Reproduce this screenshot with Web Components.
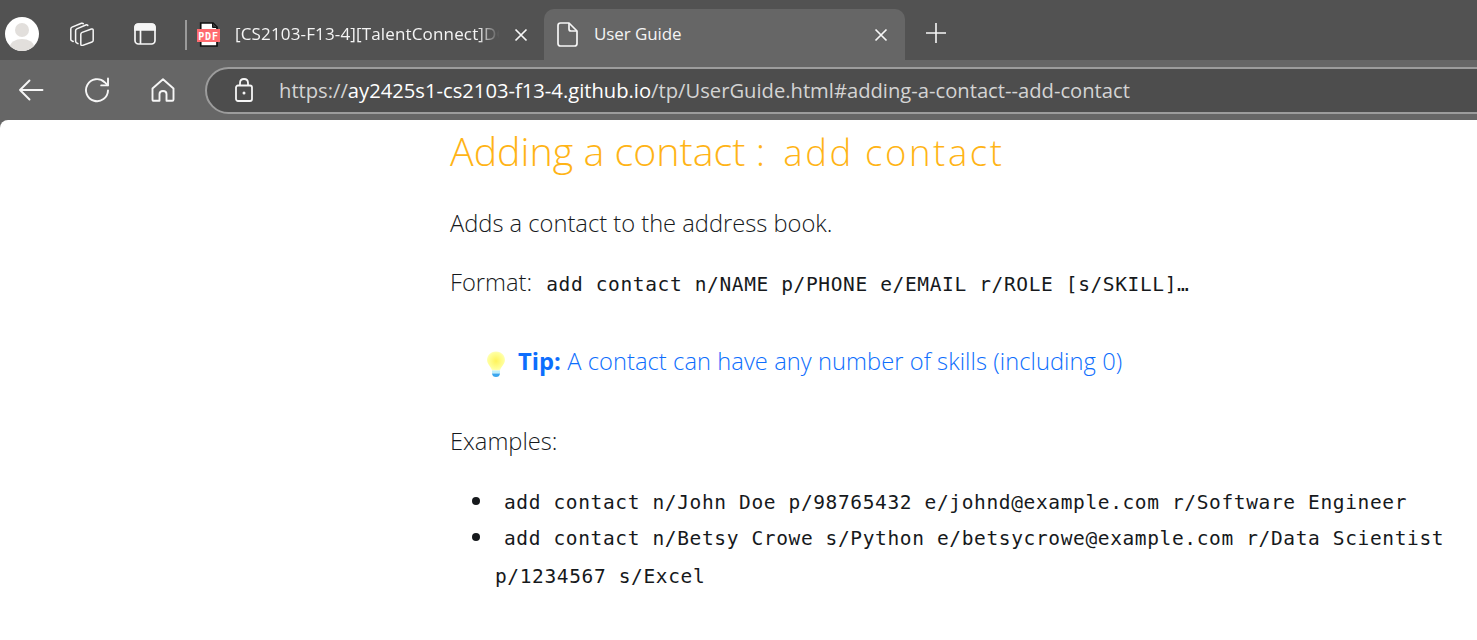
<!DOCTYPE html>
<html>
<head>
<meta charset="utf-8">
<title>User Guide</title>
<style>
  html, body { margin: 0; padding: 0; height: 640px; overflow: hidden; background: #666; }
  body { font-family: "Open Sans", "Noto Sans", sans-serif; }
</style>
</head>
<body>

<browser-tabstrip>
  <browser-tab slot="tabs" title-text="[CS2103-F13-4][TalentConnect]DG" kind="pdf"></browser-tab>
  <browser-tab slot="tabs" title-text="User Guide" kind="doc" active></browser-tab>
</browser-tabstrip>
<browser-toolbar></browser-toolbar>

<doc-page>
  <doc-heading>Adding a contact : <inline-code slot="code">add contact</inline-code></doc-heading>
  <doc-para style="margin-top:27px">Adds a contact to the address book.</doc-para>
  <doc-para style="margin-top:21px">Format: <inline-code>add contact n/NAME p/PHONE e/EMAIL r/ROLE [s/SKILL]…</inline-code></doc-para>
  <tip-box>A contact can have any number of skills (including 0)</tip-box>
  <doc-para>Examples:</doc-para>
  <doc-list>
    <doc-item><inline-code>add contact n/John Doe p/98765432 e/johnd@example.com r/Software Engineer</inline-code></doc-item>
    <doc-item><inline-code>add contact n/Betsy Crowe s/Python e/betsycrowe@example.com r/Data Scientist p/1234567 s/Excel</inline-code></doc-item>
  </doc-list>
</doc-page>

<script>
// icons used in the browser chrome
const icons = {
  tabs: '<svg width="24" height="24" viewBox="0 0 24 24" fill="none" stroke="#f6f6f6" stroke-width="1.5" stroke-linejoin="round" stroke-linecap="round"><path d="M3.2 19.5L1.6 18.6Q0.7 18 0.8 17L0.8 7Q0.8 5.6 2 5.1L11.5 1.3Q12.6 1 13.2 1.6"/><path d="M8 21.6L6.6 20.8Q5.6 20.2 5.6 19L5.6 8.8Q5.6 7.4 6.8 6.9L15.8 3Q17 2.6 17.8 3.4"/><path d="M12.2 10.4L21.4 7Q23.2 6.5 23.2 8.2L23.2 18.2Q23.2 19.6 22 20L12.6 23.4Q10.8 23.9 10.8 22.2L10.8 12.2Q10.8 10.9 12.2 10.4Z"/></svg>',
  sidebar: '<svg width="22" height="22" viewBox="0 0 22 22" fill="none" stroke="#f6f6f6" stroke-width="1.7"><path d="M4.5 1H17.5Q21 1 21 4.5V7H1V4.5Q1 1 4.5 1Z" fill="#f6f6f6"/><rect x="1" y="1" width="20" height="20" rx="3.5"/><path d="M6.5 7V21"/></svg>',
  close: '<svg width="14" height="14" viewBox="0 0 14 14" stroke="#f6f6f6" stroke-width="1.7" fill="none"><path d="M1.5 1.5L12.5 12.5M12.5 1.5L1.5 12.5"/></svg>',
  plus: '<svg width="22" height="22" viewBox="0 0 22 22" stroke="#f6f6f6" stroke-width="1.6" fill="none"><path d="M11 1V21M1 11H21"/></svg>',
  back: '<svg width="26" height="24" viewBox="0 0 26 24" fill="none" stroke="#f6f6f6" stroke-width="1.9" stroke-linecap="round" stroke-linejoin="round"><path d="M2 12H24.5M11.5 2.5L2 12L11.5 21.5"/></svg>',
  refresh: '<svg width="26" height="26" viewBox="0 0 26 26" fill="none" stroke="#f6f6f6" stroke-width="1.9" stroke-linecap="round" stroke-linejoin="round"><path d="M24 13.5A11 11 0 1 1 20.6 5.2L23.6 8.2"/><path d="M24 1.5V8.4H17.2"/></svg>',
  home: '<svg width="24" height="24" viewBox="0 0 24 24" fill="none" stroke="#f6f6f6" stroke-width="1.9" stroke-linejoin="round"><path d="M1.5 10.5L12 1.2L22.5 10.5V21.5Q22.5 22.8 21.2 22.8H15.5V16Q15.5 13 12 13Q8.5 13 8.5 16V22.8H2.8Q1.5 22.8 1.5 21.5Z"/></svg>',
  lock: '<svg width="18" height="24" viewBox="0 0 18 24" fill="none" stroke="#f6f6f6" stroke-width="1.8"><rect x="1" y="7.5" width="16" height="15.5" rx="2"/><path d="M5 7.5V5Q5 1 9 1Q13 1 13 5V7.5"/><circle cx="9" cy="15" r="1.5" fill="#f6f6f6" stroke="none"/></svg>',
  doc: '<svg width="21" height="25" viewBox="0 0 21 25" fill="none" stroke="#f6f6f6" stroke-width="1.7" stroke-linejoin="round"><path d="M3.5 1H12L20 9V21.5Q20 24 17.5 24H3.5Q1 24 1 21.5V3.5Q1 1 3.5 1Z"/><path d="M12 1V7Q12 9 14 9H20"/></svg>',
  pdf: '<svg width="23" height="25" viewBox="0 0 23 25"><path d="M3.7 1H16L20 5V24H3.7Z" fill="#fff" stroke="#111" stroke-width="1.7"/><path d="M15.5 1V5.5H20" fill="#333" stroke="#111" stroke-width="1"/><rect x="0" y="7" width="23" height="13" fill="#ff6b6f"/><text x="11.5" y="17.5" font-family="DejaVu Sans Mono" font-size="10" font-weight="700" letter-spacing="0.8" fill="#fff" text-anchor="middle">PDF</text></svg>'
};

class BrowserTabstrip extends HTMLElement {
  constructor() {
    super();
    this.attachShadow({ mode: 'open' });
    this.shadowRoot.innerHTML = `
      <style>
        :host { display: flex; height: 60px; background: #525252; align-items: flex-end; box-sizing: border-box; }
        .avatar { width: 34px; height: 34px; border-radius: 50%; background: #fff; margin: 0 0 9px 5px; overflow: hidden; flex: none; }
        .btn { display: flex; align-items: center; justify-content: center; flex: none; height: 52px; }
        .btn.tabs { width: 24px; margin-left: 31px; }
        .btn.side { width: 22px; margin-left: 40px; }
        .sep { width: 2px; height: 30px; background: #9a9a9a; margin: 0 3px 10px 29px; flex: none; }
        .tabs-row { display: flex; gap: 4px; }
        .plus { margin-left: 20px; height: 54px; }
      </style>
      <div class="avatar">
        <svg width="34" height="34" viewBox="0 0 34 34"><circle cx="17" cy="13" r="7" fill="#e2dfdc"/><ellipse cx="17" cy="30" rx="12" ry="8" fill="#e2dfdc"/></svg>
      </div>
      <div class="btn tabs">${icons.tabs}</div>
      <div class="btn side">${icons.sidebar}</div>
      <div class="sep"></div>
      <div class="tabs-row"><slot name="tabs"></slot></div>
      <div class="btn plus">${icons.plus}</div>
    `;
  }
}

class BrowserTab extends HTMLElement {
  constructor() {
    super();
    this.attachShadow({ mode: 'open' });
  }

  connectedCallback() {
    const kind = this.getAttribute('kind');
    const title = this.getAttribute('title-text');
    this.shadowRoot.innerHTML = `
      <style>
        :host { display: block; }
        .tab { display: flex; align-items: center; box-sizing: border-box; height: 51px; color: #f4f4f4; font-size: 17px; }
        .tab.off { width: 350px; padding: 0 12px 0 7px; border-radius: 10px 10px 0 0; letter-spacing: 0.15px; }
        .tab.on { width: 361px; padding: 0 17px 0 13px; background: #666; border-radius: 10px 10px 0 0; letter-spacing: -0.1px; }
        .ico { flex: none; width: 24px; display: flex; }
        .title { flex: 1; min-width: 0; white-space: nowrap; margin-left: 14px; padding-bottom: 2px; }
        .off .title { margin-right: -8px; -webkit-mask-image: linear-gradient(90deg, #000 91%, transparent 99%); mask-image: linear-gradient(90deg, #000 91%, transparent 99%); }
        .on .title { margin-left: 13px; }
        .close { flex: none; display: flex; margin-left: 12px; }
        .off .close { margin-left: 20px; }
      </style>
      <div class="tab ${this.hasAttribute('active') ? 'on' : 'off'}">
        <span class="ico">${icons[kind]}</span>
        <span class="title">${title}</span>
        <span class="close">${icons.close}</span>
      </div>
    `;
  }
}

class BrowserToolbar extends HTMLElement {
  constructor() {
    super();
    this.attachShadow({ mode: 'open' });
    this.shadowRoot.innerHTML = `
      <style>
        :host { display: flex; align-items: center; height: 60px; background: #666; box-sizing: border-box; }
        .btn { flex: none; display: flex; justify-content: center; width: 26px; }
        .back { margin-left: 18px; }
        .refresh { margin-left: 40px; }
        .home { margin-left: 40px; }
        .omni { flex: 1; min-width: 0; margin-left: 29px; margin-right: -30px; height: 47px; box-sizing: border-box; border: 2px solid #9c9c9c; border-radius: 24px; background: #4d4d4d; display: flex; align-items: center; padding-left: 28px; color: #d4d4d4; font-size: 20.2px; white-space: nowrap; }
        .lock { flex: none; display: flex; margin-right: 26px; }
        b { font-weight: 400; color: #fff; }
      </style>
      <div class="btn back">${icons.back}</div>
      <div class="btn refresh">${icons.refresh}</div>
      <div class="btn home">${icons.home}</div>
      <div class="omni">
        <span class="lock">${icons.lock}</span>
        <span>https://<b>ay2425s1-cs2103-f13-4.github.io</b>/tp/UserGuide.html#adding-a-contact--add-contact</span>
      </div>
    `;
  }
}

class DocPage extends HTMLElement {
  constructor() {
    super();
    this.attachShadow({ mode: 'open' });
    this.shadowRoot.innerHTML = `
      <style>
        :host { display: block; height: 520px; background: #fff; border-radius: 8px 0 0 0; box-sizing: border-box; padding: 0 0 0 450px; color: #16191c; font-size: 23.7px; overflow: hidden; }
      </style>
      <slot></slot>
    `;
  }
}

class DocHeading extends HTMLElement {
  constructor() {
    super();
    this.attachShadow({ mode: 'open' });
    this.shadowRoot.innerHTML = `
      <style>
        :host { display: block; color: #ffb416; font-size: 39.4px; line-height: 50px; font-weight: 300; --code-size: 36.5px; --code-spacing: 2.6px; --code-word: -1px; --code-font: "Open Sans"; --code-weight: 300; --code-pad: 8px; white-space: nowrap; margin-top: 6px; }
      </style>
      <slot></slot><slot name="code"></slot>
    `;
  }
}

class DocPara extends HTMLElement {
  constructor() {
    super();
    this.attachShadow({ mode: 'open' });
    this.shadowRoot.innerHTML = `
      <style>
        :host { display: block; line-height: 38px; font-weight: 300; white-space: nowrap; }
      </style>
      <slot></slot>
    `;
  }
}

class InlineCode extends HTMLElement {
  constructor() {
    super();
    this.attachShadow({ mode: 'open' });
    this.shadowRoot.innerHTML = `
      <style>
        :host { display: inline; font-family: var(--code-font, "DejaVu Sans Mono"), "Liberation Mono", monospace; font-size: var(--code-size, 19.5px); letter-spacing: var(--code-spacing, 0.63px); word-spacing: var(--code-word, 0); font-weight: var(--code-weight, 400); padding-left: var(--code-pad, 8px); white-space: normal; }
      </style>
      <slot></slot>
    `;
  }
}

class TipBox extends HTMLElement {
  constructor() {
    super();
    this.attachShadow({ mode: 'open' });
    this.shadowRoot.innerHTML = `
      <style>
        :host { display: flex; align-items: center; height: 38px; margin: 38px 0 42px 36px; color: #0d6efd; font-weight: 300; white-space: nowrap; letter-spacing: 0.06px; }
        svg { flex: none; margin: 7px 12px 0 0; }
        b { font-weight: 700; }
        span { white-space: pre; }
      </style>
      <svg width="20" height="27" viewBox="0 0 20 27">
        <defs><radialGradient id="glow" cx="50%" cy="50%" r="60%"><stop offset="0" stop-color="#fff35a"/><stop offset="0.7" stop-color="#ffff9a"/><stop offset="1" stop-color="#ffffd8"/></radialGradient></defs>
        <path d="M10 0.5C4 0.5 1 5 1 9C1 13 5 15.5 6 19.5H14C15 15.5 19 13 19 9C19 5 16 0.5 10 0.5Z" fill="url(#glow)"/>
        <rect x="6" y="19.5" width="8" height="3" fill="#bfeefa"/>
        <path d="M6 22.5H14Q13.5 26 10 26Q6.5 26 6 22.5Z" fill="#3aa6ee"/>
      </svg>
      <span><b>Tip:</b> <slot></slot></span>
    `;
  }
}

class DocList extends HTMLElement {
  constructor() {
    super();
    this.attachShadow({ mode: 'open' });
    this.shadowRoot.innerHTML = `
      <style>
        :host { display: block; margin-top: 22.5px; padding-left: 45px; }
      </style>
      <slot></slot>
    `;
  }
}

class DocItem extends HTMLElement {
  constructor() {
    super();
    this.attachShadow({ mode: 'open' });
    this.shadowRoot.innerHTML = `
      <style>
        :host { display: list-item; list-style: disc; line-height: 35.5px; font-weight: 300; --code-pad: 9px; width: 965px; }
        :host(:not(:first-child)) { margin-top: -1px; }
      </style>
      <slot></slot>
    `;
  }
}

customElements.define('browser-tabstrip', BrowserTabstrip);
customElements.define('browser-tab', BrowserTab);
customElements.define('browser-toolbar', BrowserToolbar);
customElements.define('doc-page', DocPage);
customElements.define('doc-heading', DocHeading);
customElements.define('doc-para', DocPara);
customElements.define('inline-code', InlineCode);
customElements.define('tip-box', TipBox);
customElements.define('doc-list', DocList);
customElements.define('doc-item', DocItem);
</script>
</body>
</html>
